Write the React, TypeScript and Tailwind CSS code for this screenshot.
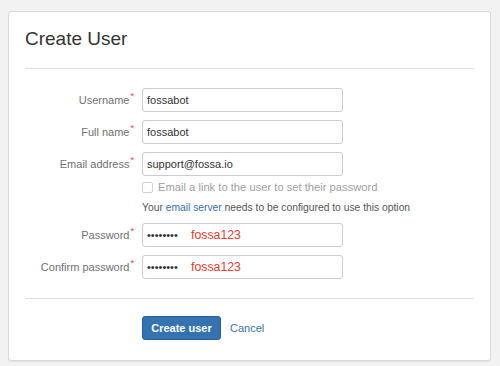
import React from "react";

const font = { fontFamily: '"Liberation Sans", Arial, sans-serif' };

function Label({ text }: { text: string }) {
  return (
    <div className="w-[117px] shrink-0 pr-[8px] flex justify-end items-center text-[11px] text-[#707070] whitespace-nowrap">
      <span>{text}</span>
      <span className="text-[#d04437] text-[9px] leading-none self-start mt-[4px] ml-[1px]">*</span>
    </div>
  );
}

function Field({ label, value }: { label: string; value: string }) {
  return (
    <div className="flex items-stretch h-[24px]">
      <Label text={label} />
      <div className="w-[201px] h-[24px] border border-[#cccccc] rounded-[3px] bg-white flex items-center pl-[4px] text-[11px] text-[#333333]">
        {value}
      </div>
    </div>
  );
}

function PasswordField({ label }: { label: string }) {
  return (
    <div className="flex items-stretch h-[24px]">
      <Label text={label} />
      <div className="w-[201px] h-[24px] border border-[#cccccc] rounded-[3px] bg-white flex items-center pl-[4px] text-[#333333]">
        <span className="text-[11px] w-[44px]">••••••••</span>
        <span className="text-[12.3px] text-[#ee3a2c]">fossa123</span>
      </div>
    </div>
  );
}

export default function App() {
  return (
    <div className="w-[500px] h-[366px] bg-[#f2f2f2] pt-[11px] pl-[8px]" style={font}>
      <div className="w-[483px] h-[350px] bg-white border border-[#d9d9d9] rounded-[3px] px-[16px] pt-[16px] shadow-[0_1px_1px_rgba(0,0,0,0.06)]">
        <h1 className="text-[19px] leading-[22px] text-[#333333] m-0">Create User</h1>
        <div className="mt-[18px] border-t border-[#dfdfdf]" />
        <div className="pt-[19px] flex flex-col">
          <Field label="Username" value="fossabot" />
          <div className="h-[8px]" />
          <Field label="Full name" value="fossabot" />
          <div className="h-[8px]" />
          <Field label="Email address" value="support@fossa.io" />
          <div className="flex items-center h-[14px] mt-[4px] pl-[117px]">
            <div className="w-[11px] h-[11px] border border-[#d0d0d0] rounded-[2px] bg-white" />
            <span className="ml-[5px] text-[11.2px] text-[#a0a0a0]">Email a link to the user to set their password</span>
          </div>
          <div className="h-[12px] leading-[12px] mt-[8px] pl-[117px] text-[10.3px] text-[#555555]">
            Your <span className="text-[#3572b0]">email server</span> needs to be configured to use this option
          </div>
          <div className="h-[9px]" />
          <PasswordField label="Password" />
          <div className="h-[8px]" />
          <PasswordField label="Confirm password" />
        </div>
        <div className="mt-[19px] border-t border-[#dfdfdf]" />
        <div className="pt-[17px] pl-[117px] flex items-center">
          <div className="h-[24px] w-[79px] bg-[#3572b0] border border-[#2a5f95] rounded-[3px] flex items-center justify-center text-white font-bold text-[11px]">
            Create user
          </div>
          <span className="ml-[9px] text-[11px] text-[#3572b0]">Cancel</span>
        </div>
      </div>
    </div>
  );
}
